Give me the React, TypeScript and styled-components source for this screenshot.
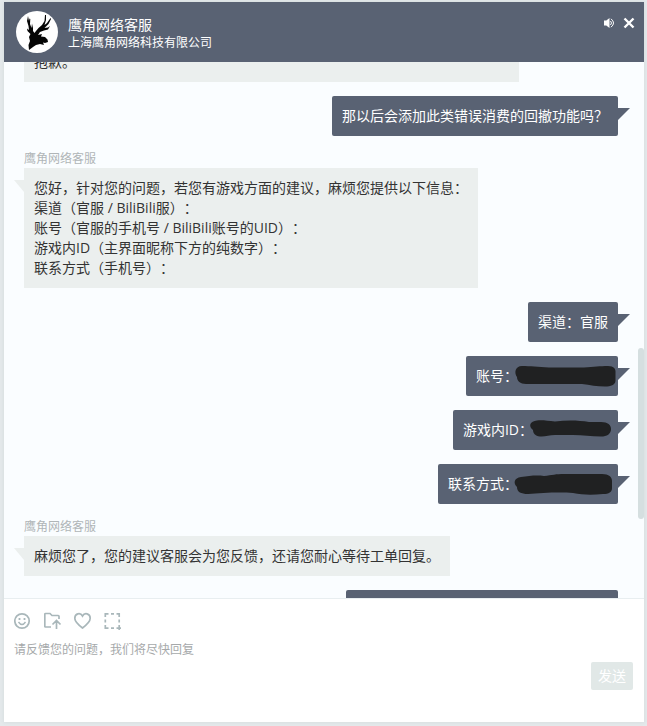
import React, { useLayoutEffect, useRef } from "react";
import styled, { createGlobalStyle } from "styled-components";

const GlobalStyle = createGlobalStyle`
  * { box-sizing: border-box; }
  body {
    margin: 0;
    background: #e4e9eb;
    font-family: "Open Sans", "Noto Sans CJK SC", sans-serif;
    font-size: 14px;
    line-height: 20px;
    text-spacing-trim: space-all;
  }
  button, textarea { font: inherit; }
`;

const Page = styled.div`
  display: flex;
  height: 100vh;
  padding: 2px 3px 4px 4px;
`;

const Panel = styled.main`
  display: flex;
  flex: 1;
  flex-direction: column;
  min-width: 0;
  background: #fafdff;
  box-shadow: 0 0 4px rgba(90, 105, 115, 0.12);
`;

const Header = styled.header`
  display: flex;
  align-items: center;
  gap: 10px;
  height: 60px;
  padding: 0 8px 0 12px;
  background: #596273;
  color: #fff;
`;

const Titles = styled.div`
  flex: 1;
  min-width: 0;
  padding-top: 3px;
`;

const Name = styled.h1`
  margin: 0;
  font-size: 14px;
  font-weight: 400;
  line-height: 18px;
`;

const Company = styled.p`
  margin: 0;
  font-size: 12px;
  line-height: 18px;
`;

const HeaderActions = styled.div`
  display: flex;
  align-self: flex-start;
  gap: 6px;
  padding-top: 14px;
`;

const IconButton = styled.button`
  display: flex;
  padding: 0;
  border: 0;
  background: none;
  color: inherit;
  cursor: pointer;
`;

const Conversation = styled.section`
  position: relative;
  display: flex;
  flex: 1;
  min-height: 0;
`;

const Messages = styled.div`
  display: flex;
  flex: 1;
  flex-direction: column;
  gap: 14px;
  min-width: 0;
  padding: 14px 26px 14px 20px;
  overflow-y: auto;
  scrollbar-width: none;
`;

const ScrollThumb = styled.div`
  position: absolute;
  top: 286px;
  right: 0;
  width: 6px;
  height: 171px;
  border-radius: 3px;
  background: #d5dfe0;
`;

const Message = styled.article<{ $own?: boolean }>`
  display: flex;
  flex: none;
  flex-direction: column;
  align-items: ${(p) => (p.$own ? "flex-end" : "flex-start")};
`;

const Sender = styled.div`
  color: #b0b5b7;
  font-size: 12px;
  line-height: 18px;
`;

const Bubble = styled.div<{ $own?: boolean; $tall?: boolean }>`
  position: relative;
  display: flex;
  align-items: ${(p) => (p.$tall ? "flex-end" : "flex-start")};
  min-height: ${(p) => (p.$tall ? "100px" : "40px")};
  padding: 10px;
  width: ${(p) => (p.$tall ? "calc(100% * 5 / 6)" : "auto")};
  border-radius: ${(p) => (p.$own ? "2px" : "0")};
  background: ${(p) => (p.$own ? "#596273" : "#ebefee")};
  color: ${(p) => (p.$own ? "#fff" : "#333")};
  white-space: pre-line;

  &::after {
    content: "";
    position: absolute;
    top: 12px;
    ${(p) => (p.$own ? "right: -12px" : "left: -10px")};
    width: ${(p) => (p.$own ? "12px" : "10px")};
    height: 12px;
    background: inherit;
    clip-path: ${(p) => (p.$own ? "polygon(0 0, 100% 0, 0 100%)" : "polygon(0 0, 100% 0, 100% 100%)")};
  }
`;

const Scribble = styled.svg`
  flex: none;
  height: 24px;
  margin: -2px 0;
  overflow: visible;
`;

const Composer = styled.form`
  display: flex;
  flex-direction: column;
  height: 124px;
  padding: 13px 11px 32px 10px;
  border-top: 1px solid #e8eef0;
  background: #fff;
`;

const Tools = styled.div`
  display: flex;
  gap: 12px;
  color: #a9b7ba;
`;

const Input = styled.textarea`
  flex: 1;
  min-height: 0;
  margin-top: 11px;
  padding: 0;
  border: 0;
  outline: 0;
  resize: none;
  background: none;
  color: #333;
  font-size: 12px;
  line-height: 18px;

  &::placeholder { color: #a6a9aa; opacity: 1; }
`;

const SendButton = styled.button`
  align-self: flex-end;
  flex: none;
  width: 42px;
  height: 28px;
  padding: 0;
  border: 0;
  border-radius: 2px;
  background: #e1e8e7;
  color: #fff;
`;

function Avatar() {
  return (
    <svg width="42" height="42" viewBox="0 0 42 42" role="img" aria-label="鹰角网络">
      <circle cx="21" cy="21" r="21" fill="#fff" />
      <path
        fill="#050505"
        d="M13 39 12.500 34 14 30 13 26 14.500 23 11.500 20 11 17.500 13 19 12.500 15 11 10 12 5 13 10 13.500 7.500 14.300 8 14 13 15.500 17 16 12.500 17 17 17 20 18.500 22 20 20 22.500 17 26 14 28.500 10 29 4 30 4 30 9 28.500 14 31 12 34.500 7 35 8 32.500 13 28.500 17 32 16.500 34 15 32 18.500 28 19.500 24 21 22 24 26 23 25 25.500 29 26 31.500 28.500 32 31 29 32 27 31.500 28 34 24 33 20 34 17 36Z"
      />
    </svg>
  );
}

function SpeakerIcon() {
  return (
    <svg width="12" height="14" viewBox="0 0 12 14" fill="none" stroke="currentColor" aria-hidden="true">
      <path d="M0 4.500h2.300L5.500 2v10L2.300 9.500H0z" fill="currentColor" stroke="none" />
      <path d="M6.500 5q2 2 0 4M7 2.800q5 4.200 0 8.400" />
    </svg>
  );
}

function CloseIcon() {
  return (
    <svg width="14" height="14" viewBox="0 0 14 14" stroke="currentColor" strokeWidth="2.400" aria-hidden="true">
      <path d="m2.500 2.500 9 9m0-9-9 9" />
    </svg>
  );
}

type ToolKind = "emoji" | "file" | "rate" | "capture";

const toolList: { kind: ToolKind; label: string }[] = [
  { kind: "emoji", label: "表情" },
  { kind: "file", label: "发送文件" },
  { kind: "rate", label: "评价" },
  { kind: "capture", label: "截图" },
];

function ToolIcon({ kind }: { kind: ToolKind }) {
  return (
    <svg width="18" height="18" viewBox="0 0 18 18" fill="none" stroke="currentColor" strokeWidth="1.700" aria-hidden="true">
      {kind === "emoji" && (
        <>
          <circle cx="8" cy="9" r="7.200" />
          <path d="M4.500 10q3.500 5 7 0" strokeWidth="1.400" />
          <path d="M5.500 6v2M10.500 6v2" strokeWidth="1.800" />
        </>
      )}
      {kind === "file" && (
        <path d="M7 15H1.300Q.8 15 .8 14.300V2.300Q.8 1.500 1.500 1.500H6l2 2h6.200q.8 0 .8.800V7M12.500 17V9.500M8.500 12.500l4-4 4 4" />
      )}
      {kind === "rate" && (
        <path d="M8.500 16C4.500 13 .8 10 .8 6.300.8 1.300 6.500.3 8.500 4c2-3.700 7.700-2.700 7.700 2.300 0 3.700-3.700 6.700-7.700 9.700Z" />
      )}
      {kind === "capture" && (
        <path d="M1.300 5V1.800H4.500M7 1.800h3M12.500 1.800h2.700V5M15.200 7.500v3M15.200 13v5M17 16.200h-4.500M10 16.200H7M4.500 16.200H1.300V13M1.300 10.500v-3" />
      )}
    </svg>
  );
}

function Redaction({ width, d }: { width: number; d: string }) {
  return (
    <Scribble width={width} viewBox={`0 0 ${width} 24`} role="img" aria-label="已隐藏">
      <path d={d} fill="#202122" />
    </Scribble>
  );
}

interface ChatItem {
  text: string;
  own?: boolean;
  tall?: boolean;
  sender?: string;
  mask?: { width: number; d: string };
}

const items: ChatItem[] = [
  { text: "抱歉。", tall: true },
  { text: "那以后会添加此类错误消费的回撤功能吗？", own: true },
  {
    sender: "鹰角网络客服",
    text: "您好，针对您的问题，若您有游戏方面的建议，麻烦您提供以下信息：\n渠道（官服 / BiliBili服）：\n账号（官服的手机号 / BiliBili账号的UID）：\n游戏内ID（主界面昵称下方的纯数字）：\n联系方式（手机号）：",
  },
  { text: "渠道：官服", own: true },
  {
    text: "账号：",
    own: true,
    mask: {
      width: 90,
      d: "M4 2C12 2 20 3 31 3.500H66C76 3 82 2 90 2C96 2 98 5 97.500 9V17C97 21 93 22.500 87 22.500C79 22.500 72 21 64 20H8C2 20-1 17-1 13C-4 9-3 2 4 2Z",
    },
  },
  {
    text: "游戏内ID：",
    own: true,
    mask: {
      width: 75,
      d: "M4 2.500C10 2 15 3 22 3.500C33 2 45 2 56 4H68C75 4 78 7 78 11C78 16 74 18.500 68 18.500C58 18.500 50 17 40 17H22C16 17 12 19 7 18.500C2 18 0 15 0 12C-5 8-3 3 4 2.500Z",
    },
  },
  {
    text: "联系方式：",
    own: true,
    mask: {
      width: 90,
      d: "M3 5C11 4 18 3 26 4C34 3 38 2 46 2H84C91 2 94 5 94 9V16C94 20 91 22 85 22C74 23 65 23 55 21C41 20 23 21 10 22C3 22-1 20-1 15C-5 11-4 6 3 5Z",
    },
  },
  { sender: "鹰角网络客服", text: "麻烦您了，您的建议客服会为您反馈，还请您耐心等待工单回复。" },
  { text: "好的，谢谢，希望能够尽快添加此功能。", own: true },
];

export default function App() {
  const messages = useRef<HTMLDivElement>(null);

  useLayoutEffect(() => {
    if (messages.current) messages.current.scrollTop = 94;
  }, []);

  return (
    <>
      <GlobalStyle />
      <Page>
        <Panel>
          <Header>
            <Avatar />
            <Titles>
              <Name>鹰角网络客服</Name>
              <Company>上海鹰角网络科技有限公司</Company>
            </Titles>
            <HeaderActions>
              <IconButton type="button" aria-label="声音"><SpeakerIcon /></IconButton>
              <IconButton type="button" aria-label="关闭"><CloseIcon /></IconButton>
            </HeaderActions>
          </Header>
          <Conversation>
            <Messages ref={messages}>
              {items.map((item, index) => (
                <Message key={index} $own={item.own}>
                  {item.sender && <Sender>{item.sender}</Sender>}
                  <Bubble $own={item.own} $tall={item.tall}>
                    {item.text}
                    {item.mask && <Redaction {...item.mask} />}
                  </Bubble>
                </Message>
              ))}
            </Messages>
            <ScrollThumb />
          </Conversation>
          <Composer onSubmit={(event) => event.preventDefault()}>
            <Tools>
              {toolList.map((tool) => (
                <IconButton key={tool.kind} type="button" aria-label={tool.label}>
                  <ToolIcon kind={tool.kind} />
                </IconButton>
              ))}
            </Tools>
            <Input aria-label="消息" placeholder="请反馈您的问题，我们将尽快回复" />
            <SendButton type="submit">发送</SendButton>
          </Composer>
        </Panel>
      </Page>
    </>
  );
}
